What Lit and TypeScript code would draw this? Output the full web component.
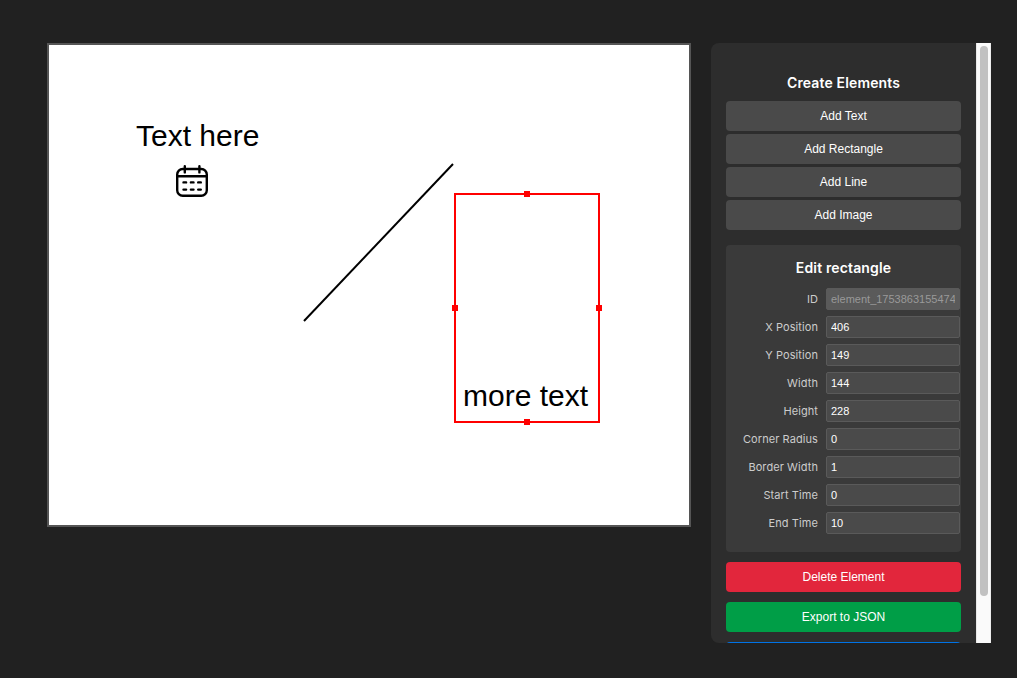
import { LitElement, html, css } from "lit";
import { customElement, state } from "lit/decorators.js";

interface Field {
  label: string;
  value: string;
  disabled?: boolean;
}

@customElement("editor-canvas")
class EditorCanvas extends LitElement {
  static styles = css`
    :host {
      display: block;
      flex: none;
      border: 2px solid #555;
      background: #fff;
    }
    svg {
      display: block;
    }
    .label {
      font-family: "Liberation Sans", Arial, sans-serif;
      font-size: 30px;
      fill: #000;
    }
    .line {
      stroke: #000;
      stroke-width: 2;
    }
    .selection {
      fill: none;
      stroke: #f00;
      stroke-width: 2;
    }
    .handle {
      fill: #f00;
    }
    .icon {
      fill: none;
      stroke: #000;
      stroke-width: 2.4;
      stroke-linecap: round;
      stroke-linejoin: round;
    }
  `;

  render() {
    return html`
      <svg width="640" height="480" viewBox="0 0 640 480">
        <text class="label" x="87" y="101">Text here</text>
        <g class="icon" transform="translate(127 120)">
          <rect x="1.2" y="4" width="29.6" height="26.8" rx="5.5" />
          <path d="M1.2 11.2H30.8M8.8 1.2V7.4M23.4 1.2V7.4" />
          <path
            d="M7.5 17.4H10.1M14.9 17.4H17.5M22.2 17.4H24.8M7.5 24.6H10.1M14.9 24.6H17.5M22.2 24.6H24.8"
          />
        </g>
        <line class="line" x1="255" y1="276" x2="404" y2="119" />
        <text class="label" x="414" y="361">more text</text>
        <rect class="selection" x="406" y="149" width="144" height="228" />
        <rect class="handle" x="475" y="146" width="6" height="6" />
        <rect class="handle" x="475" y="374" width="6" height="6" />
        <rect class="handle" x="403" y="260" width="6" height="6" />
        <rect class="handle" x="547" y="260" width="6" height="6" />
      </svg>
    `;
  }
}

@customElement("editor-panel")
class EditorPanel extends LitElement {
  static styles = css`
    :host {
      display: flex;
      flex: none;
      width: 280px;
      height: 600px;
      overflow: hidden;
      border-radius: 8px 0 0 8px;
      background: #2d2d2d;
      font-family: Inter, sans-serif;
    }
    .content {
      box-sizing: border-box;
      width: 265px;
      height: 600px;
      padding: 30px 15px 0;
      overflow: hidden;
    }
    .title {
      margin: 0;
      height: 20px;
      line-height: 20px;
      font-size: 14px;
      font-weight: 600;
      letter-spacing: 0.14px;
      text-align: center;
      color: #fff;
    }
    .create {
      display: flex;
      flex-direction: column;
      gap: 3px;
      margin-top: 8px;
    }
    .btn {
      display: block;
      width: 100%;
      height: 30px;
      padding: 0;
      border: 0;
      border-radius: 4px;
      background: #4a4a4a;
      color: #fff;
      font: 12px "Liberation Sans", Arial, sans-serif;
    }
    .edit {
      box-sizing: border-box;
      height: 307px;
      margin-top: 15px;
      padding: 13px 1px 0 10px;
      border-radius: 4px;
      background: #3a3a3a;
    }
    .edit .title {
      padding-right: 9px;
    }
    .fields {
      display: grid;
      gap: 6px;
      margin-top: 10px;
    }
    .row {
      display: grid;
      grid-template-columns: 82px 134px;
      justify-content: end;
      column-gap: 8px;
      align-items: center;
    }
    .name {
      font-size: 11px;
      letter-spacing: 0.08px;
      text-align: right;
      color: #ccc;
    }
    .input {
      box-sizing: border-box;
      width: 134px;
      height: 22px;
      padding: 0 4px;
      border: 1px solid #5a5a5a;
      border-radius: 2px;
      background: #4a4a4a;
      color: #fff;
      font: 11px "Liberation Sans", Arial, sans-serif;
    }
    .input:disabled {
      background: #5a5a5a;
      color: #999;
    }
    .danger {
      margin-top: 10px;
      background: #e2263c;
    }
    .success {
      margin-top: 10px;
      background: #009e47;
    }
    .primary {
      margin-top: 10px;
      background: #0073e6;
    }
    .track {
      box-sizing: border-box;
      display: flex;
      justify-content: center;
      width: 15px;
      padding-top: 3px;
      padding-left: 1px;
      border-left: 1px solid #e8e8e8;
      border-right: 1px solid #ededed;
      background: #fafafa;
    }
    .thumb {
      width: 8px;
      height: 550px;
      border-radius: 4px;
      background: #c1c1c1;
    }
  `;

  @state() fields: Field[] = [
    { label: "ID", value: "element_1753863155474", disabled: true },
    { label: "X Position", value: "406" },
    { label: "Y Position", value: "149" },
    { label: "Width", value: "144" },
    { label: "Height", value: "228" },
    { label: "Corner Radius", value: "0" },
    { label: "Border Width", value: "1" },
    { label: "Start Time", value: "0" },
    { label: "End Time", value: "10" },
  ];

  render() {
    return html`
      <div class="content">
        <h3 class="title">Create Elements</h3>
        <div class="create">
          ${["Add Text", "Add Rectangle", "Add Line", "Add Image"].map(
            (name) => html`<button class="btn">${name}</button>`
          )}
        </div>
        <section class="edit">
          <h3 class="title">Edit rectangle</h3>
          <div class="fields">
            ${this.fields.map(
              (f) => html`<label class="row">
                <span class="name">${f.label}</span>
                <input class="input" .value=${f.value} ?disabled=${!!f.disabled} />
              </label>`
            )}
          </div>
        </section>
        <button class="btn danger">Delete Element</button>
        <button class="btn success">Export to JSON</button>
        <button class="btn primary"></button>
      </div>
      <div class="track"><div class="thumb"></div></div>
    `;
  }
}

@customElement("app-root")
class AppRoot extends LitElement {
  static styles = css`
    :host {
      box-sizing: border-box;
      display: flex;
      align-items: flex-start;
      gap: 20px;
      width: 100%;
      height: 100vh;
      padding: 43px 0 0 47px;
      overflow: hidden;
      background: #212121;
    }
  `;

  render() {
    return html`<editor-canvas></editor-canvas><editor-panel></editor-panel>`;
  }
}
